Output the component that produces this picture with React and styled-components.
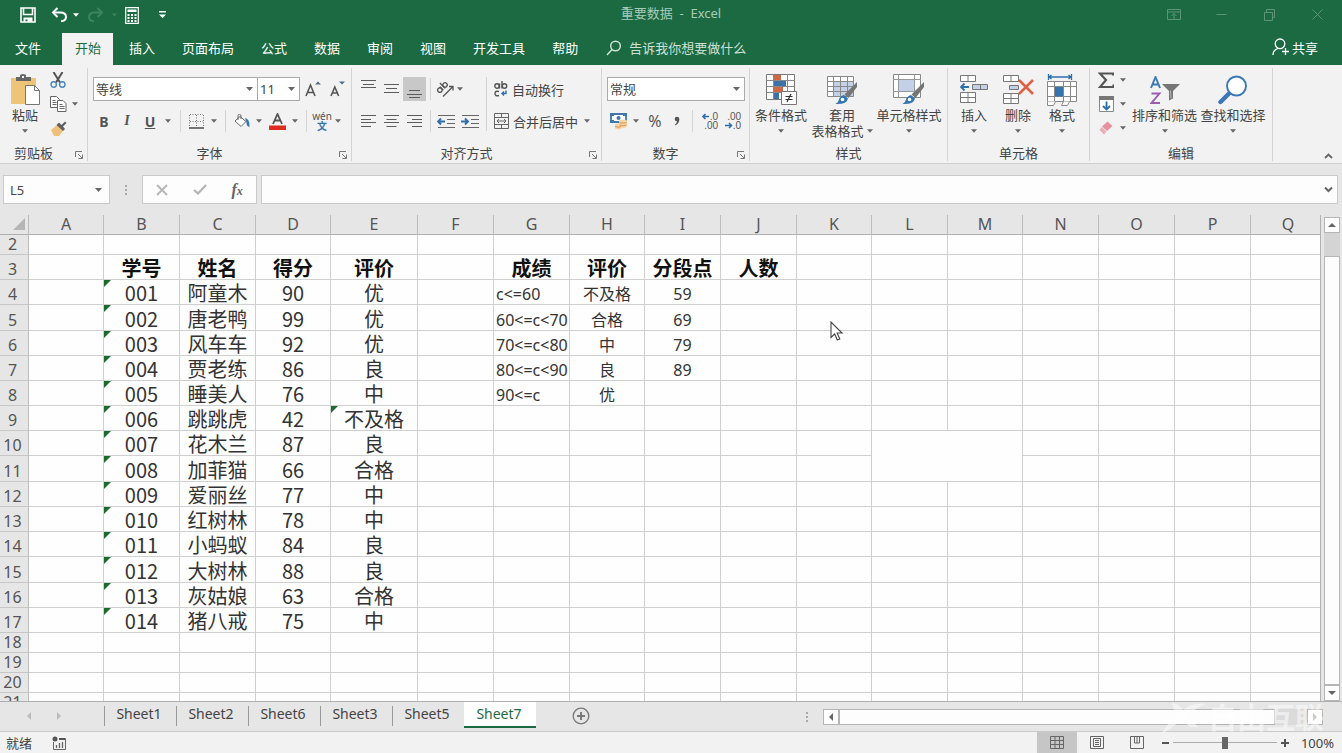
import { useState } from 'react';
import styled, { createGlobalStyle, css } from 'styled-components';

const TABS = ['插入', '页面布局', '公式', '数据', '审阅', '视图', '开发工具', '帮助'];
const SHEETS = ['Sheet1', 'Sheet2', 'Sheet6', 'Sheet3', 'Sheet5', 'Sheet7'];

const COLUMNS = [
  ['A', 75], ['B', 76], ['C', 76], ['D', 75], ['E', 87], ['F', 76],
  ['G', 76], ['H', 75], ['I', 76], ['J', 76], ['K', 75], ['L', 76],
  ['M', 75], ['N', 76], ['O', 76], ['P', 76], ['Q', null],
];

const STUDENTS = [
  ['001', '阿童木', 90, '优'],
  ['002', '唐老鸭', 99, '优'],
  ['003', '风车车', 92, '优'],
  ['004', '贾老练', 86, '良'],
  ['005', '睡美人', 76, '中'],
  ['006', '跳跳虎', 42, '不及格'],
  ['007', '花木兰', 87, '良'],
  ['008', '加菲猫', 66, '合格'],
  ['009', '爱丽丝', 77, '中'],
  ['010', '红树林', 78, '中'],
  ['011', '小蚂蚁', 84, '良'],
  ['012', '大树林', 88, '良'],
  ['013', '灰姑娘', 63, '合格'],
  ['014', '猪八戒', 75, '中'],
];

const LEVELS = [
  ['c<=60', '不及格', 59],
  ['60<=c<70', '合格', 69],
  ['70<=c<80', '中', 79],
  ['80<=c<90', '良', 89],
  ['90<=c', '优', ''],
];

const HEADINGS = { B: '学号', C: '姓名', D: '得分', E: '评价', G: '成绩', H: '评价', I: '分段点', J: '人数' };

const TALL_ROWS = [5, 11, 15];

const rowHeight = (n) => {
  if (n < 3 || n > 17) return 20;
  return TALL_ROWS.includes(n) ? 26 : 25;
};

const cellAt = (col, row) => {
  if (row === 3) return { text: HEADINGS[col], kind: 'head' };
  const student = STUDENTS[row - 4];
  const level = LEVELS[row - 4];
  if (student && 'BCDE'.includes(col)) {
    return {
      text: student['BCDE'.indexOf(col)],
      kind: 'big',
      flag: col === 'B' || (col === 'E' && row === 9),
    };
  }
  if (level && 'GHI'.includes(col)) {
    return { text: level['GHI'.indexOf(col)], kind: col === 'G' ? 'left' : 'small' };
  }
  return { text: '', kind: 'small' };
};

/* ---------- icons ---------- */

const Caret = ({ size = 7, color = '#666' }) => (
  <svg width={size} height="4" viewBox="0 0 7 4" aria-hidden="true">
    <path d="M0 0h7L3.500 4z" fill={color} />
  </svg>
);

const SaveIcon = () => (
  <svg width="16" height="16" viewBox="0 0 16 16" fill="none" stroke="#fff" strokeWidth="1.600">
    <path d="M1 1h14v14H1z" />
    <path d="M3.500 1v6.500h9V1" />
    <path d="M3.500 10.500h9V15h-5v-2.500h-2V15h-2z" fill="#fff" stroke="none" />
  </svg>
);

const UndoIcon = ({ flip, color = '#fff' }) => (
  <svg width="17" height="16" viewBox="0 0 17 16" fill="none" stroke={color} strokeWidth="2">
    <g transform={flip ? 'matrix(-1 0 0 1 17 0)' : undefined}>
      <path d="M2 5.500h7.500c3.500 0 5.500 1.700 5.500 4.500 0 2.600-1.800 4-5 4.200" />
      <path d="M6.500 1 2 5.500 6.500 10" />
    </g>
  </svg>
);

const CalcIcon = () => (
  <svg width="14" height="17" viewBox="0 0 14 17">
    <path d="M.7.700h12.600v15.600H.7z" fill="none" stroke="#fff" strokeWidth="1.200" />
    <path d="M2.500 2.500h9v2.500h-9z" fill="#fff" />
    <path d="M2.500 7h2v2h-2zm3.500 0h2v2H6zm3.500 0h2v2h-2zm-7 3h2v2h-2zm3.500 0h2v2H6zm3.500 0h2v2h-2zm-7 3h2v2h-2zm3.500 0h2v2H6zm3.500 0h2v2h-2z" fill="#fff" />
  </svg>
);

const PasteIcon = () => (
  <svg width="30" height="32" viewBox="0 0 30 32">
    <path d="M1 4h25v26H1z" fill="#eec578" />
    <path d="M6 3h4V1.500Q10 0 13 0t3 1.500V3h5v4H6z" fill="#666" />
    <path d="M12 2h2v2h-2z" fill="#fff" />
    <path d="M15.500 11.500h9l5 5v14h-14z" fill="#fff" stroke="#777" />
    <path d="M24.500 11.500v5h5" fill="none" stroke="#777" />
  </svg>
);

const CutIcon = () => (
  <svg width="16" height="16" viewBox="0 0 16 16" fill="none">
    <path d="M3.500 0 10 10.500M12.500 0 6 10.500" stroke="#555" strokeWidth="2" />
    <circle cx="3.700" cy="12.500" r="2.700" stroke="#4a86bd" strokeWidth="1.400" />
    <circle cx="12.300" cy="12.500" r="2.700" stroke="#4a86bd" strokeWidth="1.400" />
  </svg>
);

const CopyIcon = () => (
  <svg width="17" height="16" viewBox="0 0 17 16" fill="#fff" stroke="#666">
    <path d="M.5.500h6l3 3v8h-9z" />
    <path d="M2.500 4.500h3m-3 2h4m-4 2h4" />
    <path d="M7.500 4.500h5.500l3 3v8H7.500z" />
    <path d="M9.500 8.500h3m-3 2h5m-5 2h5" />
  </svg>
);

const BrushIcon = () => (
  <svg width="17" height="15" viewBox="0 0 17 15">
    <path d="m7 4 6 6-4 5H4L1 9z" fill="#eec07a" />
    <path d="M6.500 4 9 1.500l2.500 2.500 3.500-3.500L16.500 2 13 5.500 15 8l-2 2z" fill="#5f5f5f" />
  </svg>
);

const GrowFont = ({ down }) => (
  <svg width="16" height="18" viewBox="0 0 16 18" fill="none">
    <path d={down ? 'm2 16 3.800-9 3.800 9M3.300 13h5' : 'm1 16 4.500-11L10 16M2.500 12.500h6'} stroke="#555" strokeWidth="1.600" />
    <path d={down ? 'M10 1.500h6L13 4.500z' : 'M10 4.500h6L13 1.500z'} fill="#4f6a86" />
  </svg>
);

const BorderIcon = () => (
  <svg width="15" height="15" viewBox="0 0 15 15" fill="none">
    <path d="M.5 1v12M7.500 1v12M14.500 1v12M1 .5h13M1 7.500h13" stroke="#777" strokeDasharray="1 1.500" />
    <path d="M0 14h15" stroke="#555" strokeWidth="1.600" />
  </svg>
);

const FillIcon = () => (
  <svg width="17" height="15" viewBox="0 0 17 15">
    <path d="m6 2.500 6 5-5 5-6-5.500z" fill="#fff" stroke="#666" />
    <path d="M4 6V1.500Q4 .5 5.500.500T7 2v3" fill="none" stroke="#666" />
    <path d="M11 4q5 1 4.500 9-3-.5-3-4.500z" fill="#3574ad" />
  </svg>
);

const FontColorIcon = () => (
  <svg width="17" height="17" viewBox="0 0 17 17">
    <path d="M4 11 8.500 1 13 11M5.500 7.500h6" fill="none" stroke="#555" strokeWidth="1.800" />
    <path d="M0 12.500h17V17H0z" fill="#dd2c20" />
  </svg>
);

const AlignIcon = ({ type }) => {
  const paths = {
    top: 'M0 .5h15M2 4.500h11M0 7.500h15',
    middle: 'M0 4.500h15M2 8.500h11M0 12.500h15',
    bottom: 'M2 10.500h11M0 14.500h15M2 17.500h11',
    left: 'M0 3.500h15M0 7.500h10M0 10.500h15M0 14.500h10',
    center: 'M0 3.500h15M2.500 7.500h10M0 10.500h15M2.500 14.500h10',
    right: 'M0 3.500h15M5 7.500h10M0 10.500h15M5 14.500h10',
  };
  return (
    <svg width="15" height="19" viewBox="0 0 15 19" stroke="#5c5c5c" fill="none">
      <path d={paths[type]} />
    </svg>
  );
};

const OrientIcon = () => (
  <svg width="18" height="18" viewBox="0 0 18 18" fill="none" stroke="#555" strokeWidth="1.300">
    <g transform="rotate(-45 6 8)">
      <circle cx="3" cy="8" r="2.200" />
      <path d="M5.500 5.500v5M8 3v7.500" />
      <circle cx="10.300" cy="8" r="2.200" />
    </g>
    <path d="m7 16.500 9.500-9.500M13 6.500h4v4" />
  </svg>
);

const IndentIcon = ({ right }) => (
  <svg width="18" height="15" viewBox="0 0 18 15" fill="none">
    <path d="M1 1.500h17M10 5.500h8M10 9.500h8M1 13.500h17" stroke="#666" />
    <path d={right ? 'M0 7.500h7M4 4.500l3 3-3 3' : 'M8 7.500H1M4 4.500l-3 3 3 3'} stroke="#2f6fab" strokeWidth="1.900" />
  </svg>
);

const WrapIcon = () => (
  <svg width="14" height="18" viewBox="0 0 14 18" fill="none" stroke="#555" strokeWidth="1.400">
    <circle cx="3" cy="6" r="2.200" />
    <path d="M5.500 3.500V8.500M8 1v7.500" />
    <circle cx="10.500" cy="6" r="2.200" />
    <path d="M5 11.500q-4-1-4 2t4 2" />
    <path d="M12 10.500v3H8m2-2-2 2 2 2" stroke="#2f6fab" />
  </svg>
);

const MergeIcon = () => (
  <svg width="15" height="16" viewBox="0 0 15 16" fill="none" stroke="#666">
    <path d="M.5.500h14v15H.5zM0 4.500h15M0 11.500h15M7.500 0v4.500M7.500 11.500V16" />
    <path d="M3 8h9M5 6 3 8l2 2M10 6l2 2-2 2" />
  </svg>
);

const MoneyIcon = () => (
  <svg width="18" height="17" viewBox="0 0 18 17">
    <path d="M1 1h15v8H1z" fill="#fff" stroke="#3f78ad" strokeWidth="1.800" />
    <path d="M0 0h4v3H0zM13 0h4v3h-4zM0 7h4v3H0z" fill="#3f78ad" />
    <circle cx="8.500" cy="5" r="2" fill="#3f78ad" />
    <path d="M9 7.500q4-2 8 0v6q-2 2-5 1.500-2 2.500-7 .5v-4q2-1.500 4-1z" fill="#f5d3a4" />
    <path d="M9.500 9.500q3.500 1.500 7 0M9.500 12q4 1.500 7 0M5 13.500q3 1.500 6 0" fill="none" stroke="#d99a52" />
  </svg>
);

const CommaIcon = () => (
  <svg width="6" height="10" viewBox="0 0 6 10">
    <circle cx="3" cy="3" r="2.300" fill="#555" />
    <path d="M5.300 3q.2 4-4 6.500L1 8.500Q3 7 3 5z" fill="#555" />
  </svg>
);

const SmallArrow = ({ right }) => (
  <svg width="8" height="7" viewBox="0 0 8 7" fill="none" stroke="#2f6fab" strokeWidth="1.600">
    <path d={right ? 'M0 3.500h6.500M4 1l2.500 2.500L4 6' : 'M7 3.500H1M3.500 1 1 3.500 3.500 6'} />
  </svg>
);

const CondIcon = () => (
  <svg width="32" height="32" viewBox="0 0 32 32">
    <path d="M1.500.5h28v25h-28z" fill="#fff" stroke="#777" />
    <path d="M9 1h7v5H9zM9 13h9v5.500H9z" fill="#cf6846" />
    <path d="M9 7h12v5.500H9zM9 19h5v6H9z" fill="#3b73a8" />
    <path d="M8.500 0v26M22.500 0v26M1.500 6.500h28M1.500 12.500h28M1.500 18.500h28" stroke="#888" />
    <path d="M16.500 17.500h15v13h-15z" fill="#fff" stroke="#777" />
    <path d="M20.500 22.500h7M20.500 25.500h7M26 20l-4 8" stroke="#333" strokeWidth="1.200" />
  </svg>
);

const PaintBrush = () => (
  <>
    <path d="M31 8v5L22.500 24l-4-3.500z" fill="#757575" />
    <path d="m18 21 4 3.500q-1 6-12.500 5.500 3-1.500 3.500-4.500t5-4.500z" fill="#3576b0" />
    <circle cx="16.500" cy="25.500" r="1.800" fill="#fff" />
  </>
);

const TableStyleIcon = () => (
  <svg width="32" height="32" viewBox="0 0 32 32">
    <path d="M1.500 2.500h26v20h-26z" fill="#fff" />
    <path d="M7 7.500h20.500v15H7z" fill="#c3d0e6" />
    <path d="M1.500 2.500h26v20h-26zM1 7.500h27M1 12.500h27M1 17.500h27M7.500 2.500v20M14.500 2.500v20M21.500 2.500v20" fill="none" stroke="#888" />
    <PaintBrush />
  </svg>
);

const CellStyleIcon = () => (
  <svg width="32" height="32" viewBox="0 0 32 32">
    <path d="M.5.500h27v23H.5z" fill="#fff" stroke="#888" />
    <path d="M6 6h15v11H6z" fill="#c3d0e6" />
    <path d="M5.500.500v23M21.500.500v23M0 5.500h28M0 17.500h28" stroke="#999" />
    <PaintBrush />
  </svg>
);

const InsertIcon = () => (
  <svg width="28" height="30" viewBox="0 0 28 30" fill="#fff" stroke="#777">
    <path d="M.5.500h15v6H.5zM8 .5v6M.5 17.500h15v10H.5zM.5 22.500h15M8 17.500v10" />
    <path d="M12.500 9.500h15v5h-15z" fill="#c3d0e6" />
    <path d="M20.500 9.500v5" />
    <path d="M1 12h8M4.500 8.500 1 12l3.500 3.500" fill="none" stroke="#2f6fab" strokeWidth="1.800" />
  </svg>
);

const DeleteIcon = () => (
  <svg width="31" height="30" viewBox="0 0 31 30" fill="#fff" stroke="#777">
    <path d="M.5.500h15v6H.5zM8 .5v6M.5 18.500h15v10H.5zM.5 23.500h15M8 18.500v10" />
    <path d="M6.500 10.500h9v4h-9z" fill="#c3d0e6" />
    <path d="m16 5 14 14M30 5 16 19" fill="none" stroke="#dc6244" strokeWidth="2.600" />
  </svg>
);

const FormatIcon = () => (
  <svg width="30" height="33" viewBox="0 0 30 33" fill="none" stroke="#888">
    <path d="M1 3h23M1.500 0v6M24.500 0v6M4.500 1 2 3l2.500 2M21.500 1 24 3l-2.500 2" stroke="#2f6fab" strokeWidth="1.300" />
    <path d="M.5 7.500h29v20H.5z" fill="#fff" />
    <path d="M.5 12.500h29M.5 22.500h29M7.500 7.500v20M16.500 7.500v20M23.500 7.500v20" />
    <path d="M8 13h8v9.500H8z" fill="#3574ad" stroke="none" />
    <path d="M.5 27.500v4h6l2-4h8l-2 4h6l2-4" fill="#fff" />
  </svg>
);

const SumIcon = () => (
  <svg width="16" height="17" viewBox="0 0 16 17" fill="none" stroke="#555" strokeWidth="2.200">
    <path d="M15 3.500V1.500H2l6 6.500-6 7h13.500V12.500" />
  </svg>
);

const FillDownIcon = () => (
  <svg width="15" height="16" viewBox="0 0 15 16" fill="#fff" stroke="#888">
    <path d="M.5.500h14v15H.5z" />
    <path d="M0 0h15v4H0z" fill="#777" stroke="none" />
    <path d="M7.500 5.500v8M4 10l3.500 3.500L11 10" fill="none" stroke="#2f6fab" strokeWidth="1.900" />
  </svg>
);

const EraserIcon = () => (
  <svg width="14" height="14" viewBox="0 0 14 14">
    <path d="M8.500.500 13.500 5 8 10 3 5.500z" fill="#e8909d" />
    <path d="M2.500 6 7.500 10.500 5 13.500.500 9z" fill="#e8909d" opacity=".7" />
  </svg>
);

const SortIcon = () => (
  <svg width="30" height="29" viewBox="0 0 30 29" fill="none">
    <path d="m1 12 4.500-11L10 12M2.700 8.500h5.600" stroke="#3b78b5" strokeWidth="1.900" />
    <path d="M1.500 17.500h8l-8 9.500h8.500" stroke="#9a5fb0" strokeWidth="1.900" />
    <path d="M12 8h18l-7 7v7.500l-4 2V15z" fill="#767676" />
    <path d="m20.500 14.500.5 8" stroke="#bbb" />
  </svg>
);

const FindIcon = () => (
  <svg width="30" height="30" viewBox="0 0 30 30">
    <path d="M12.500 17 2.500 27" stroke="#3b78b5" strokeWidth="4.400" strokeLinecap="round" />
    <circle cx="18.500" cy="11" r="9.500" fill="#fff" stroke="#3b78b5" strokeWidth="1.900" />
  </svg>
);

const LauncherIcon = () => (
  <svg width="8" height="8" viewBox="0 0 8 8" fill="none" stroke="#777">
    <path d="M.5 6V.5H7M3 3l4 4M7.500 3.500v4h-4" />
  </svg>
);

const ShareIcon = () => (
  <svg width="17" height="18" viewBox="0 0 17 18" fill="none" stroke="#fff" strokeWidth="1.300">
    <circle cx="8" cy="5.800" r="4.800" />
    <path d="M1 17q0-5 5-6.500M10 13.500h7M13.500 10v7" />
  </svg>
);

const SearchIcon = () => (
  <svg width="16" height="16" viewBox="0 0 16 16" fill="none" stroke="#cfe0d6" strokeWidth="1.500">
    <circle cx="9.500" cy="6" r="4.800" />
    <path d="M6 9.500 1 15" />
  </svg>
);

const WindowIcon = ({ type }) => {
  const paths = {
    ribbon: 'M.5 1.500h13v10H.5zM.5 4h13M7 11V6M4.500 8 7 5.500 9.500 8',
    min: 'M1.500 6.500h10',
    restore: 'M1.500 4.500h8v8h-8zM3.500 4.500v-3h8v8h-2',
    close: 'm1.500 1.500 10 10m0-10-10 10',
  };
  return (
    <svg width="14" height="13" viewBox="0 0 14 13" fill="none" stroke="#5d9478">
      <path d={paths[type]} />
    </svg>
  );
};

const ViewIcon = ({ type }) => {
  const paths = {
    grid: 'M.5.500h13v12H.5zM5 .5v12M9.500.500v12M.5 4.500h13M.5 8.500h13',
    page: 'M.5.500h13v12H.5zM3.500 2.500h7v8h-7zM5 4.500h4M5 6.500h4M5 8.500h4',
    preview: 'M.5.500h13v12H.5zM4.500.500v6.500h5V.500M7 .5v6.500',
  };
  return (
    <svg width="14" height="13" viewBox="0 0 14 13" fill="none" stroke="#666">
      <path d={paths[type]} />
    </svg>
  );
};

const MacroIcon = () => (
  <svg width="14" height="14" viewBox="0 0 14 14" fill="none" stroke="#666">
    <path d="M7 2.500h6.500v11H1.500V6" />
    <path d="M7 2h6v2H7z" fill="#555" stroke="none" />
    <circle cx="3" cy="3" r="2.500" fill="#555" stroke="none" />
    <path d="M4.500 9v3M7.500 7v5M10.500 6v6" strokeWidth="1.300" />
  </svg>
);

const Triangle = ({ dir, color = '#666' }) => {
  const paths = { left: 'M6 0v8L2 4z', right: 'M2 0v8l4-4z', up: 'M0 6h8L4 2z', down: 'M0 2h8L4 6z' };
  return (
    <svg width="8" height="8" viewBox="0 0 8 8">
      <path d={paths[dir]} fill={color} />
    </svg>
  );
};

/* ---------- ribbon parts ---------- */

const BigTool = ({ icon, label, second, width }) => (
  <BigButton type="button" $w={width}>
    <IconBox>{icon}</IconBox>
    <span>{label}</span>
    <SecondLine>
      {second}
      <Caret size={6} />
    </SecondLine>
  </BigButton>
);

const Group = ({ title, width, launcher, children }) => (
  <GroupBox $w={width}>
    <GroupBody>{children}</GroupBody>
    <GroupFooter>
      <span>{title}</span>
      {launcher && (
        <Launcher type="button" aria-label={`${title}设置`}>
          <LauncherIcon />
        </Launcher>
      )}
    </GroupFooter>
  </GroupBox>
);

const Drop = ({ width = 12, label }) => (
  <Tool type="button" $w={width} aria-label={label}>
    <Caret size={6} />
  </Tool>
);

const Ribbon = () => (
  <RibbonBar>
    <Group title="剪贴板" width={88} launcher>
      <Big $pad={2}>
        <BigTool icon={<PasteIcon />} label="粘贴" width={46} />
      </Big>
      <SmallStack>
        <Row>
          <Tool type="button" $w={20} aria-label="剪切"><CutIcon /></Tool>
        </Row>
        <Row>
          <Tool type="button" $w={20} aria-label="复制"><CopyIcon /></Tool>
          <Drop width={14} label="复制选项" />
        </Row>
        <Row>
          <Tool type="button" $w={20} aria-label="格式刷"><BrushIcon /></Tool>
        </Row>
      </SmallStack>
    </Group>

    <Group title="字体" width={264} launcher>
      <Stack>
        <Row>
          <Combo $w={165}>
            <select aria-label="字体" defaultValue="等线"><option>等线</option></select>
            <Caret />
          </Combo>
          <Combo $w={42} $joined>
            <select aria-label="字号" defaultValue="11"><option>11</option></select>
            <Caret />
          </Combo>
          <Tool type="button" $w={26} aria-label="增大字号"><GrowFont /></Tool>
          <Tool type="button" $w={22} aria-label="减小字号"><GrowFont down /></Tool>
        </Row>
        <Row>
          <Tool type="button" $w={22}><b>B</b></Tool>
          <Tool type="button" $w={24}><Italic>I</Italic></Tool>
          <Tool type="button" $w={22}><Underlined>U</Underlined></Tool>
          <Drop width={14} label="下划线选项" />
          <Sep $w={10} />
          <Tool type="button" $w={22} aria-label="边框"><BorderIcon /></Tool>
          <Drop width={14} label="边框选项" />
          <Sep $w={9} />
          <Tool type="button" $w={24} aria-label="填充颜色"><FillIcon /></Tool>
          <Drop width={10} label="填充颜色选项" />
          <Tool type="button" $w={26} aria-label="字体颜色"><FontColorIcon /></Tool>
          <Drop width={10} label="字体颜色选项" />
          <Sep $w={12} />
          <Tool type="button" $w={20}>
            <Pinyin>wén<i>文</i></Pinyin>
          </Tool>
          <Drop label="拼音选项" />
        </Row>
      </Stack>
    </Group>

    <Group title="对齐方式" width={250} launcher>
      <Stack>
        <Row>
          <Tool type="button" $w={23} aria-label="顶端对齐"><AlignIcon type="top" /></Tool>
          <Tool type="button" $w={23} aria-label="垂直居中"><AlignIcon type="middle" /></Tool>
          <Tool type="button" $w={23} $active aria-label="底端对齐"><AlignIcon type="bottom" /></Tool>
          <Sep $w={8} />
          <Tool type="button" $w={22} aria-label="方向"><OrientIcon /></Tool>
          <Drop width={8} label="方向选项" />
        </Row>
        <Row>
          <Tool type="button" $w={23} aria-label="左对齐"><AlignIcon type="left" /></Tool>
          <Tool type="button" $w={23} aria-label="居中"><AlignIcon type="center" /></Tool>
          <Tool type="button" $w={23} aria-label="右对齐"><AlignIcon type="right" /></Tool>
          <Sep $w={8} />
          <Tool type="button" $w={24} aria-label="减少缩进量"><IndentIcon /></Tool>
          <Tool type="button" $w={24} aria-label="增加缩进量"><IndentIcon right /></Tool>
        </Row>
      </Stack>
      <Stack $divided>
        <Row>
          <WideTool type="button"><WrapIcon />自动换行</WideTool>
        </Row>
        <Row>
          <WideTool type="button"><MergeIcon />合并后居中</WideTool>
          <Drop width={18} label="合并选项" />
        </Row>
      </Stack>
    </Group>

    <Group title="数字" width={148} launcher>
      <Stack>
        <Row>
          <Combo $w={138}>
            <select aria-label="数字格式" defaultValue="常规"><option>常规</option></select>
            <Caret />
          </Combo>
        </Row>
        <Row>
          <Tool type="button" $w={23} aria-label="会计数字格式"><MoneyIcon /></Tool>
          <Drop label="会计格式选项" />
          <Tool type="button" $w={26} $size={16}>%</Tool>
          <Tool type="button" $w={18} aria-label="千位分隔样式"><CommaIcon /></Tool>
          <Sep $w={12} />
          <Tool type="button" $w={24}>
            <Decimals><span><SmallArrow />.0</span><span>.00</span></Decimals>
          </Tool>
          <Tool type="button" $w={22}>
            <Decimals><span>.00</span><span><SmallArrow right />.0</span></Decimals>
          </Tool>
        </Row>
      </Stack>
    </Group>

    <Group title="样式" width={198}>
      <Big $pad={1}>
        <BigTool icon={<CondIcon />} label="条件格式" width={60} />
        <BigTool icon={<TableStyleIcon />} label="套用" second="表格格式" width={62} />
        <BigTool icon={<CellStyleIcon />} label="单元格样式" width={72} />
      </Big>
    </Group>

    <Group title="单元格" width={142}>
      <Big $pad={4}>
        <BigTool icon={<InsertIcon />} label="插入" width={44} />
        <BigTool icon={<DeleteIcon />} label="删除" width={44} />
        <BigTool icon={<FormatIcon />} label="格式" width={44} />
      </Big>
    </Group>

    <Group title="编辑" width={183}>
      <SmallStack $pad={5}>
        <Row>
          <Tool type="button" $w={22} aria-label="自动求和"><SumIcon /></Tool>
          <Drop label="求和选项" />
        </Row>
        <Row>
          <Tool type="button" $w={22} aria-label="填充"><FillDownIcon /></Tool>
          <Drop label="填充选项" />
        </Row>
        <Row>
          <Tool type="button" $w={22} aria-label="清除"><EraserIcon /></Tool>
          <Drop label="清除选项" />
        </Row>
      </SmallStack>
      <Big $pad={1}>
        <BigTool icon={<SortIcon />} label="排序和筛选" width={69} />
        <BigTool icon={<FindIcon />} label="查找和选择" width={68} />
      </Big>
    </Group>

    <Collapse type="button" aria-label="折叠功能区">
      <svg width="9" height="6" viewBox="0 0 9 6" fill="none" stroke="#666" strokeWidth="1.800">
        <path d="m1 5 3.500-3.500L8 5" />
      </svg>
    </Collapse>
  </RibbonBar>
);

const Grid = () => {
  const rows = Array.from({ length: 20 }, (_, i) => i + 2);
  return (
    <GridArea>
      <TableClip>
        <SheetTable>
          <colgroup>
            <Col $w={29} />
            {COLUMNS.map(([name, width]) => (
              <Col key={name} $w={width} />
            ))}
          </colgroup>
          <thead>
            <tr>
              <Corner aria-label="全选">
                <svg width="12" height="12" viewBox="0 0 12 12"><path d="M12 0v12H0z" fill="#b5b5b5" /></svg>
              </Corner>
              {COLUMNS.map(([name]) => (
                <ColHead key={name} scope="col">{name}</ColHead>
              ))}
            </tr>
          </thead>
          <tbody>
            {rows.map((n) => (
              <SheetRow key={n} $h={rowHeight(n)}>
                <RowHead scope="row">{n}</RowHead>
                {COLUMNS.map(([col]) => {
                  // L10:M11 is one merged cell
                  if (col === 'L' && n === 10) return <Cell key={col} colSpan={2} rowSpan={2} />;
                  if ((col === 'L' || col === 'M') && (n === 10 || n === 11)) return null;
                  const { text, kind, flag } = cellAt(col, n);
                  return (
                    <Cell key={col} $kind={kind} $flag={flag}>{text}</Cell>
                  );
                })}
              </SheetRow>
            ))}
          </tbody>
        </SheetTable>
      </TableClip>
      <VScroll>
        <ScrollButton type="button" aria-label="向上滚动"><Triangle dir="up" /></ScrollButton>
        <VThumb />
        <ScrollButton type="button" aria-label="向下滚动"><Triangle dir="down" /></ScrollButton>
      </VScroll>
    </GridArea>
  );
};

const App = () => {
  const [sheet, setSheet] = useState('Sheet7');
  const [zoom, setZoom] = useState(50);

  return (
    <Page>
      <GlobalStyle />
      <TitleBar>
        <QuickAccess>
          <QuickButton type="button" $w={34} aria-label="保存"><SaveIcon /></QuickButton>
          <QuickButton type="button" $w={28} aria-label="撤消"><UndoIcon /></QuickButton>
          <QuickButton type="button" $w={6} aria-label="撤消列表"><Caret size={6} color="#fff" /></QuickButton>
          <QuickButton type="button" $w={32} aria-label="恢复"><UndoIcon flip color="#3d8460" /></QuickButton>
          <QuickButton type="button" $w={6} aria-label="恢复列表"><Caret size={5} color="#3d8460" /></QuickButton>
          <QuickButton type="button" $w={30} aria-label="计算器"><CalcIcon /></QuickButton>
          <QuickButton type="button" $w={30} aria-label="自定义快速访问工具栏">
            <svg width="7" height="8" viewBox="0 0 7 8"><path d="M0 0h7v1.500H0zM0 3.500h7L3.500 7z" fill="#fff" /></svg>
          </QuickButton>
        </QuickAccess>
        <Title>重要数据&nbsp; -&nbsp; Excel</Title>
        <WindowButtons>
          <QuickButton type="button" $w={48} aria-label="功能区显示选项"><WindowIcon type="ribbon" /></QuickButton>
          <QuickButton type="button" $w={48} aria-label="最小化"><WindowIcon type="min" /></QuickButton>
          <QuickButton type="button" $w={48} aria-label="还原"><WindowIcon type="restore" /></QuickButton>
          <QuickButton type="button" $w={48} aria-label="关闭"><WindowIcon type="close" /></QuickButton>
        </WindowButtons>
      </TitleBar>

      <TabBar>
        <FileTab type="button">文件</FileTab>
        <Tab type="button" $active>开始</Tab>
        {TABS.map((tab) => (
          <Tab type="button" key={tab}>{tab}</Tab>
        ))}
        <TellMe>
          <SearchIcon />
          <input aria-label="操作说明搜索" placeholder="告诉我你想要做什么" />
        </TellMe>
        <Share type="button"><ShareIcon />共享</Share>
      </TabBar>

      <Ribbon />

      <FormulaBar>
        <NameBox>
          <input aria-label="名称框" defaultValue="L5" />
          <Caret size={9} />
        </NameBox>
        <Dots><i /><i /><i /></Dots>
        <FormulaButtons>
          <button type="button" aria-label="取消">
            <svg width="12" height="12" viewBox="0 0 12 12" fill="none" stroke="#b5b5b5" strokeWidth="1.800"><path d="m1 1 10 10M11 1 1 11" /></svg>
          </button>
          <button type="button" aria-label="输入">
            <svg width="14" height="11" viewBox="0 0 14 11" fill="none" stroke="#b5b5b5" strokeWidth="2.200"><path d="m1 6 4 3.500L13 1" /></svg>
          </button>
          <button type="button"><Fx>f<small>x</small></Fx></button>
        </FormulaButtons>
        <FormulaInput>
          <input aria-label="编辑栏" />
          <svg width="9" height="7" viewBox="0 0 9 7" fill="none" stroke="#666" strokeWidth="2"><path d="m1 1.500 3.500 3.500L8 1.500" /></svg>
        </FormulaInput>
      </FormulaBar>

      <Grid />

      <SheetBar>
        <SheetNav>
          <button type="button" aria-label="上一个工作表"><Triangle dir="left" color="#bbb" /></button>
          <button type="button" aria-label="下一个工作表"><Triangle dir="right" color="#bbb" /></button>
        </SheetNav>
        {SHEETS.map((name) => (
          <SheetTab
            type="button"
            key={name}
            $active={name === sheet}
            onClick={() => setSheet(name)}
          >
            {name}
          </SheetTab>
        ))}
        <AddSheet type="button" aria-label="新工作表">
          <svg width="18" height="18" viewBox="0 0 18 18" fill="none" stroke="#777" strokeWidth="1.300">
            <circle cx="9" cy="9" r="7.800" />
            <path d="M9 5v8M5 9h8" strokeWidth="1.900" />
          </svg>
        </AddSheet>
        <Dots><i /><i /><i /></Dots>
        <HScroll>
          <ScrollButton type="button" aria-label="向左滚动"><Triangle dir="left" /></ScrollButton>
          <HThumb />
          <ScrollButton type="button" aria-label="向右滚动"><Triangle dir="right" color="#999" /></ScrollButton>
        </HScroll>
      </SheetBar>

      <StatusBar>
        <span>就绪</span>
        <MacroIcon />
        <Views>
          <ViewButton type="button" $active aria-label="普通"><ViewIcon type="grid" /></ViewButton>
          <ViewButton type="button" aria-label="页面布局视图"><ViewIcon type="page" /></ViewButton>
          <ViewButton type="button" aria-label="分页预览"><ViewIcon type="preview" /></ViewButton>
        </Views>
        <ZoomButton type="button" aria-label="缩小" onClick={() => setZoom(Math.max(0, zoom - 5))}>
          <svg width="8" height="8" viewBox="0 0 8 8"><path d="M1 3h7v2H1z" fill="#555" /></svg>
        </ZoomButton>
        <ZoomSlider
          type="range"
          aria-label="显示比例"
          min="0"
          max="100"
          value={zoom}
          onChange={(e) => setZoom(Number(e.target.value))}
        />
        <ZoomButton type="button" aria-label="放大" onClick={() => setZoom(Math.min(100, zoom + 5))}>
          <svg width="8" height="8" viewBox="0 0 8 8"><path d="M0 3h8v2H0zM3 0h2v8H3z" fill="#555" /></svg>
        </ZoomButton>
        <ZoomText>100%</ZoomText>
      </StatusBar>

      <Pointer>
        <svg width="14" height="21" viewBox="0 0 14 21">
          <path d="M1 1v15.500l3.700-3.500 2.600 6 2.500-1-2.600-6H12z" fill="#fff" stroke="#444" strokeWidth="1.100" />
        </svg>
      </Pointer>
      <Watermark>
        <svg width="46" height="34" viewBox="0 0 46 34">
          <path d="M12 2q8 1 11 7Q33 1 46 3 35 7 28 15l10 11h-8l-8-7Q12 26 1 34q6-12 15-19-3-8-4-13z" fill="#fff" />
        </svg>
        自由互联
      </Watermark>
    </Page>
  );
};

const GlobalStyle = createGlobalStyle`
  * {
    box-sizing: border-box;
  }
  body {
    margin: 0;
    font-family: 'Noto Sans', 'Noto Sans CJK SC', sans-serif;
    font-size: 13px;
    color: #444;
  }
  button, input, select {
    font: inherit;
    color: inherit;
    margin: 0;
    padding: 0;
    border: 0;
    background: none;
  }
  svg {
    display: block;
    flex: none;
  }
`;

const Page = styled.div`
  position: relative;
  display: flex;
  flex-direction: column;
  height: 100vh;
  overflow: hidden;
  background: #e6e6e6;
`;

const TitleBar = styled.header`
  display: grid;
  grid-template-columns: 1fr auto 1fr;
  height: 33px;
  flex: none;
  background: #1b6a42;
`;
const QuickAccess = styled.div`
  display: flex;
  align-items: flex-start;
  padding-left: 11px;
`;
const QuickButton = styled.button`
  display: flex;
  align-items: center;
  justify-content: center;
  width: ${(p) => p.$w}px;
  height: 30px;
`;
const Title = styled.div`
  line-height: 26px;
  color: #a9cab7;
  white-space: nowrap;
`;
const WindowButtons = styled.div`
  display: flex;
  justify-content: flex-end;
  align-items: flex-start;
  button {
    height: 28px;
  }
`;

const TabBar = styled.nav`
  display: flex;
  height: 32px;
  flex: none;
  background: #1b6a42;
  color: #fff;
`;
const Tab = styled.button`
  padding: 0 13px 4px 14px;
  white-space: nowrap;
  ${(p) =>
    p.$active &&
    css`
      padding: 0 12px 4px 13px;
      margin-right: 2px;
      background: #f2f2f2;
      color: #1b6a42;
    `}
`;
const FileTab = styled(Tab)`
  width: 62px;
  padding: 0 20px 4px 14px;
`;
const TellMe = styled.label`
  display: flex;
  flex: 1;
  align-items: center;
  gap: 7px;
  padding: 0 0 2px 15px;
  input {
    flex: 1;
    min-width: 0;
    outline: 0;
  }
  input::placeholder {
    color: #cfe0d6;
    opacity: 1;
  }
`;
const Share = styled.button`
  display: flex;
  align-items: center;
  gap: 3px;
  padding: 0 24px 4px 0;
`;

const RibbonBar = styled.section`
  display: flex;
  height: 99px;
  flex: none;
  background: #f2f2f2;
  border-bottom: 1px solid #cfcfcf;
`;
const GroupBox = styled.div`
  display: flex;
  flex-direction: column;
  flex: none;
  width: ${(p) => p.$w}px;
  margin: 3px 0 2px;
  border-right: 1px solid #d4d4d4;
`;
const GroupBody = styled.div`
  display: flex;
  flex: 1;
`;
const GroupFooter = styled.div`
  display: flex;
  align-items: center;
  height: 18px;
  span {
    flex: 1;
    text-align: center;
  }
`;
const Launcher = styled.button`
  display: flex;
  align-items: flex-end;
  justify-content: flex-end;
  width: 20px;
  height: 14px;
  padding-right: 4px;
`;
const Stack = styled.div`
  display: flex;
  flex-direction: column;
  gap: 6px;
  padding: 8px 4px 0 5px;
  ${(p) =>
    p.$divided &&
    css`
      padding-left: 8px;
      background: linear-gradient(#d4d4d4, #d4d4d4) 0 9px / 1px 54px no-repeat;
    `}
`;
const SmallStack = styled.div`
  display: flex;
  flex-direction: column;
  padding-left: ${(p) => p.$pad || 0}px;
  > div {
    height: 24px;
  }
`;
const Row = styled.div`
  display: flex;
  align-items: center;
  height: 26px;
`;
const Tool = styled.button`
  display: flex;
  align-items: center;
  justify-content: center;
  width: ${(p) => p.$w}px;
  height: 24px;
  flex: none;
  font-size: ${(p) => p.$size || 14}px;
  color: #555;
  background: ${(p) => (p.$active ? '#c8c8c8' : 'none')};
`;
const WideTool = styled.button`
  display: flex;
  align-items: center;
  gap: 4px;
  white-space: nowrap;
`;
const Italic = styled.i`
  font-family: 'Liberation Serif', serif;
  font-weight: 700;
`;
const Underlined = styled.span`
  font-weight: 700;
  text-decoration: underline;
`;
const Pinyin = styled.span`
  display: flex;
  flex-direction: column;
  align-items: center;
  font-size: 10px;
  line-height: 10px;
  i {
    font-style: normal;
    font-weight: 700;
    color: #3574ad;
  }
`;
const Decimals = styled.span`
  display: flex;
  flex-direction: column;
  align-items: flex-end;
  font-family: 'Liberation Sans', sans-serif;
  font-size: 10px;
  line-height: 9px;
  span {
    display: flex;
    align-items: center;
  }
`;
const Sep = styled.span`
  width: ${(p) => p.$w}px;
  height: 22px;
  background: linear-gradient(#d4d4d4, #d4d4d4) center / 1px 100% no-repeat;
`;
const Combo = styled.label`
  display: flex;
  align-items: center;
  width: ${(p) => p.$w}px;
  height: 24px;
  padding: 0 4px 0 2px;
  background: #fff;
  border: 1px solid #ababab;
  border-left-width: ${(p) => (p.$joined ? 0 : 1)}px;
  select {
    flex: 1;
    min-width: 0;
    appearance: none;
    outline: 0;
  }
`;
const Big = styled.div`
  display: flex;
  align-items: flex-start;
  padding: 5px 0 0 ${(p) => p.$pad}px;
`;
const BigButton = styled.button`
  display: flex;
  flex-direction: column;
  align-items: center;
  width: ${(p) => p.$w}px;
  line-height: 16px;
  white-space: nowrap;
`;
const IconBox = styled.span`
  display: flex;
  align-items: center;
  height: 34px;
`;
const SecondLine = styled.span`
  display: flex;
  align-items: center;
  gap: 3px;
  height: 16px;
`;
const Collapse = styled.button`
  align-self: flex-end;
  margin: 0 9px 4px auto;
`;

const FormulaBar = styled.div`
  display: flex;
  flex: none;
  height: 51px;
  padding: 11px 4px 11px 3px;
`;
const Field = styled.div`
  display: flex;
  align-items: center;
  background: #fdfdfd;
  border: 1px solid #c9c9c9;
`;
const NameBox = styled(Field).attrs({ as: 'label' })`
  width: 107px;
  padding: 0 6px 0 6px;
  input {
    flex: 1;
    min-width: 0;
    outline: 0;
  }
`;
const Dots = styled.span`
  display: flex;
  flex-direction: column;
  align-items: center;
  justify-content: center;
  gap: 2px;
  width: 32px;
  i {
    width: 2px;
    height: 2px;
    background: #aaa;
  }
`;
const FormulaButtons = styled(Field)`
  width: 115px;
  margin-right: 4px;
  button {
    display: flex;
    justify-content: center;
    width: 38px;
  }
`;
const Fx = styled.span`
  font: italic 700 16px 'Liberation Serif', serif;
  color: #666;
  small {
    font-size: 12px;
  }
`;
const FormulaInput = styled(Field).attrs({ as: 'label' })`
  flex: 1;
  padding-right: 4px;
  input {
    flex: 1;
    outline: 0;
  }
`;

const GridArea = styled.main`
  display: flex;
  flex: 1;
  min-height: 0;
`;
const TableClip = styled.div`
  flex: 1;
  min-width: 0;
  overflow: hidden;
  border-right: 1px solid #b0b0b0;
`;
const SheetTable = styled.table`
  width: calc(100% + 6px);
  table-layout: fixed;
  border-collapse: separate;
  border-spacing: 0;
  line-height: 20px;
`;
const Col = styled.col`
  width: ${(p) => (p.$w ? `${p.$w}px` : 'auto')};
`;
const headCell = css`
  padding: 0;
  font-size: 16px;
  font-weight: 400;
  color: #555;
  background: #e6e6e6;
`;
const Corner = styled.th`
  ${headCell}
  border-right: 1px solid #bcbcbc;
  border-bottom: 1px solid #b0b0b0;
  vertical-align: bottom;
  svg {
    margin: 0 3px 4px auto;
  }
`;
const ColHead = styled.th`
  ${headCell}
  height: 20px;
  line-height: 19px;
  border-bottom: 1px solid #b0b0b0;
  border-right: 1px solid #bcbcbc;
`;
const SheetRow = styled.tr`
  height: ${(p) => p.$h}px;
`;
const RowHead = styled.th`
  ${headCell}
  padding: 0 3px 1px 0;
  line-height: 18px;
  vertical-align: bottom;
  border-right: 1px solid #bcbcbc;
  border-bottom: 1px solid #c6c6c6;
`;
const Cell = styled.td`
  padding: 0;
  text-align: center;
  white-space: nowrap;
  vertical-align: middle;
  border-right: 1px solid #d0d0d0;
  border-bottom: 1px solid #d0d0d0;
  background: #fefefe;
  font-size: 16px;
  line-height: 18px;
  color: #333;
  ${(p) =>
    (p.$kind === 'left' || p.$kind === 'small') &&
    css`
      padding-top: 4px;
    `}
  ${(p) =>
    p.$kind === 'left' &&
    css`
      padding-left: 2px;
      text-align: left;
    `}
  ${(p) =>
    (p.$kind === 'big' || p.$kind === 'head') &&
    css`
      padding-top: 2px;
      font-family: 'Noto Sans CJK SC', sans-serif;
      font-size: 20px;
      line-height: 22px;
    `}
  ${(p) =>
    p.$kind === 'head' &&
    css`
      font-weight: 700;
      color: #111;
    `}
  ${(p) =>
    p.$flag &&
    css`
      position: relative;
      &::before {
        content: '';
        position: absolute;
        top: 0;
        left: 0;
        border-top: 7px solid #1b6a2e;
        border-right: 7px solid transparent;
      }
    `}
`;

const VScroll = styled.div`
  display: flex;
  flex-direction: column;
  width: 16px;
  margin: 2px 2px 0 3px;
  background: #d4d4d4;
`;
const ScrollButton = styled.button`
  display: flex;
  align-items: center;
  justify-content: center;
  flex: none;
  width: 16px;
  height: 16px;
  background: #fdfdfd;
  border: 1px solid #b5b5b5;
`;
const VThumb = styled.div`
  flex: 1;
  margin-top: 23px;
  background: #fdfdfd;
  border: 1px solid #b5b5b5;
`;

const SheetBar = styled.div`
  display: flex;
  flex: none;
  height: 30px;
  border-top: 1px solid #b0b0b0;
`;
const SheetNav = styled.div`
  display: flex;
  align-items: center;
  gap: 22px;
  width: 104px;
  padding: 0 0 2px 25px;
`;
const SheetTab = styled.button`
  width: 72px;
  height: 26px;
  padding: 0 2px 2px 0;
  font-size: 14px;
  line-height: 24px;
  background: linear-gradient(#999, #999) 0 4px / 1px 20px no-repeat;
  ${(p) =>
    p.$active &&
    css`
      padding-bottom: 0;
      background: #fff;
      color: #1b6a42;
      border-bottom: 2px solid #1b6a42;
    `}
`;
const AddSheet = styled.button`
  display: flex;
  align-items: center;
  height: 28px;
  margin: 0 auto 0 36px;
`;
const HScroll = styled.div`
  display: flex;
  align-items: center;
  flex: 0 1 500px;
  height: 16px;
  margin: 7px 19px 0 0;
  background: #dadada;
`;
const HThumb = styled.div`
  flex: 1;
  align-self: stretch;
  margin-right: 32px;
  background: #fdfdfd;
  border: 1px solid #b5b5b5;
`;

const StatusBar = styled.footer`
  display: flex;
  align-items: center;
  flex: none;
  height: 22px;
  padding: 0 8px 0 6px;
  background: #f2f2f2;
  border-top: 1px solid #c9c9c9;
  > span:first-child {
    margin-right: 20px;
  }
`;
const Views = styled.div`
  display: flex;
  align-self: stretch;
  margin-left: auto;
`;
const ViewButton = styled.button`
  display: flex;
  align-items: center;
  justify-content: center;
  width: 40px;
  background: ${(p) => (p.$active ? '#c6c6c6' : 'none')};
`;
const ZoomButton = styled.button`
  padding: 4px;
`;
const ZoomSlider = styled.input`
  appearance: none;
  width: 104px;
  height: 12px;
  background: linear-gradient(#aaa, #aaa) center / 100% 1px no-repeat;
  &::-webkit-slider-thumb {
    appearance: none;
    width: 6px;
    height: 12px;
    background: #666;
  }
`;
const ZoomText = styled.span`
  width: 41px;
  text-align: right;
`;

const Pointer = styled.div`
  position: absolute;
  left: 830px;
  top: 321px;
  pointer-events: none;
`;
const Watermark = styled.div`
  position: absolute;
  right: 18px;
  bottom: 18px;
  display: flex;
  align-items: center;
  gap: 2px;
  font-size: 29px;
  font-weight: 700;
  line-height: 34px;
  color: #fff;
  opacity: 0.5;
  pointer-events: none;
`;

export default App;
